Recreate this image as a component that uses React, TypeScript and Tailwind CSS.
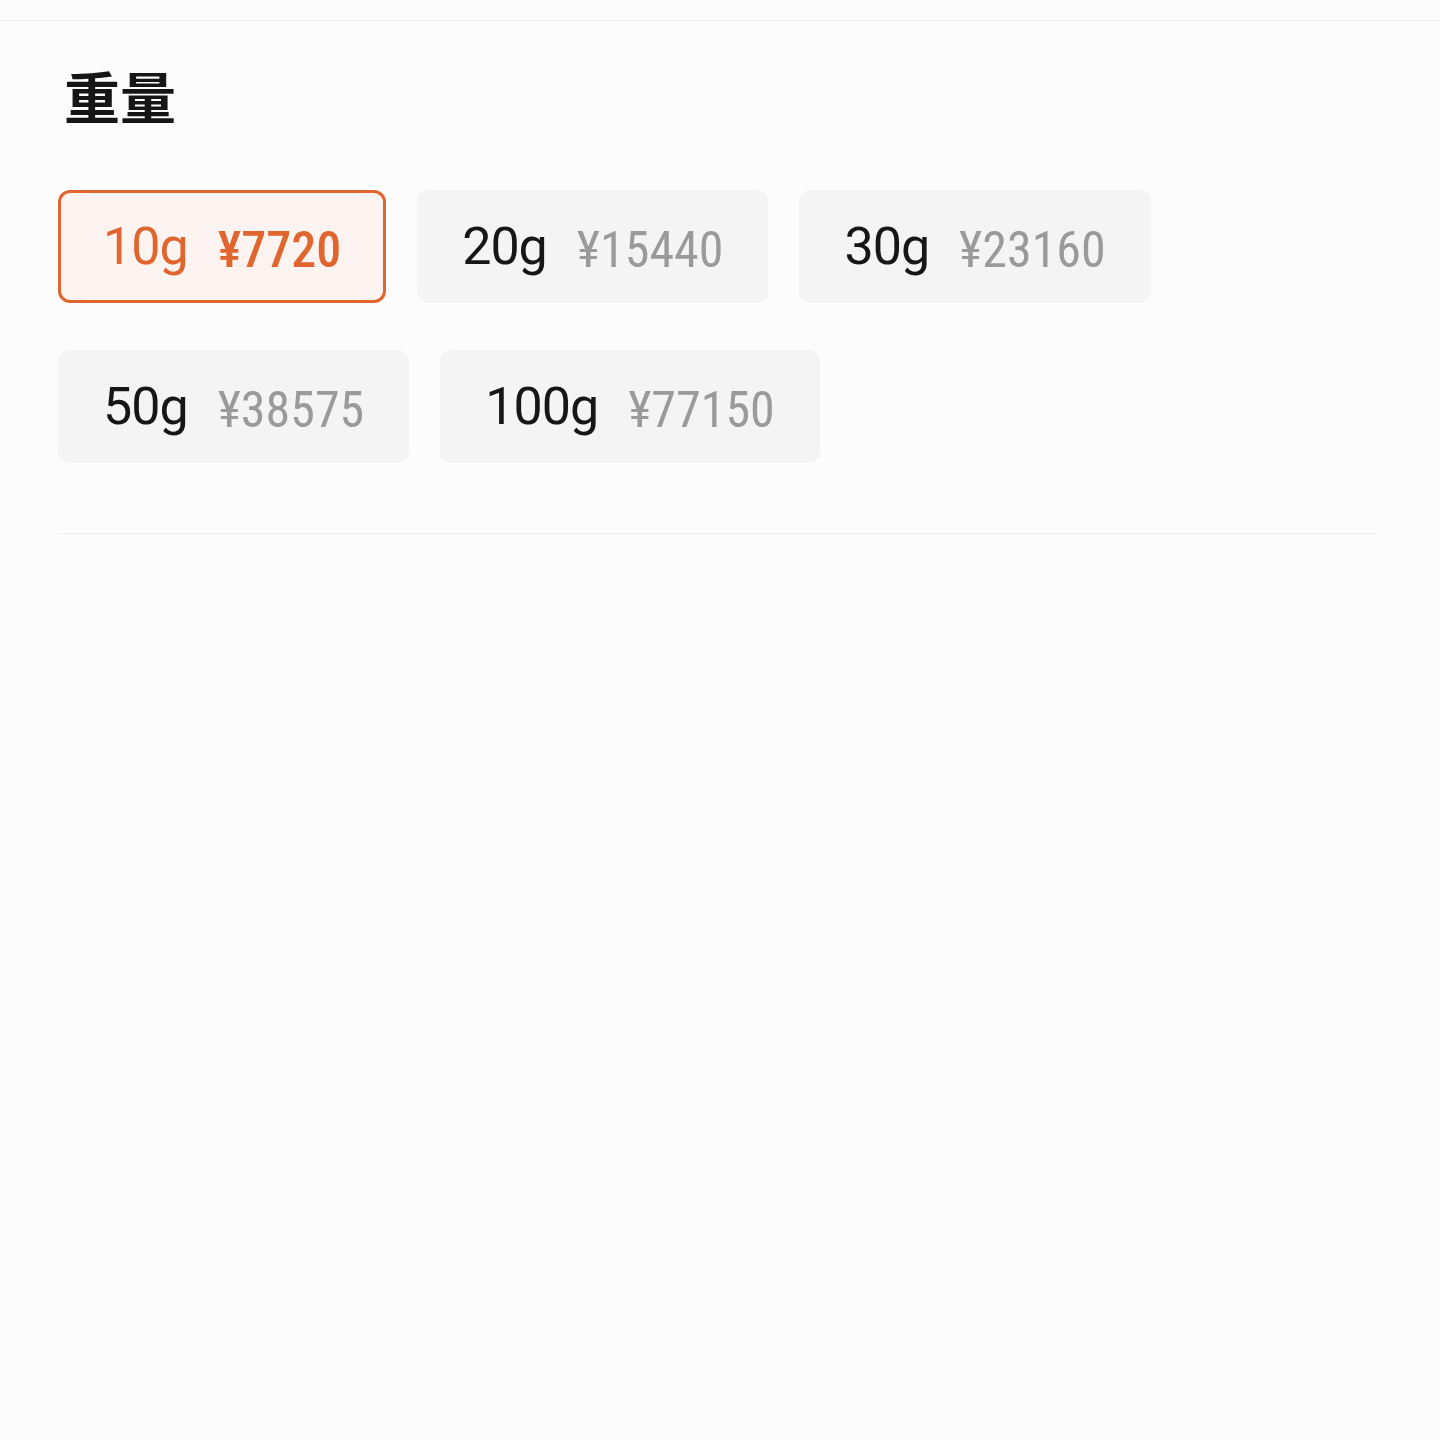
import React from 'react';

interface WeightOption {
  weight: string;
  price: number;
}

const options: WeightOption[] = [
  { weight: '10g', price: 7720 },
  { weight: '20g', price: 15440 },
  { weight: '30g', price: 23160 },
  { weight: '50g', price: 38575 },
  { weight: '100g', price: 77150 },
];

const WeightChip: React.FC<{ option: WeightOption; selected: boolean }> = ({ option, selected }) => (
  <button
    className={`flex items-center gap-[30px] h-[113px] px-[42px] rounded-[12px] border-[3px] ${
      selected ? 'border-[#e0652f] bg-[#fdf4f1]' : 'border-transparent bg-[#f4f4f4]'
    }`}
  >
    <span
      className={`text-[52px] leading-none tracking-[-1px] ${selected ? 'text-[#e0652f]' : 'text-[#161616]'}`}
      style={{ fontFamily: 'Roboto, "Noto Sans", sans-serif' }}
    >
      {option.weight}
    </span>
    <span
      className={`text-[50px] leading-none mt-[6px] ${selected ? 'text-[#e0652f] font-medium' : 'text-[#9a9a9a] font-normal'}`}
      style={{ fontFamily: '"Roboto Condensed", "Liberation Sans Narrow", Roboto, sans-serif' }}
    >
      ¥{option.price}
    </span>
  </button>
);

export default function App() {
  const selected = '10g';

  return (
    <div className="min-h-[1440px] bg-[#fcfcfc]" style={{ fontFamily: '"Noto Sans", "Noto Sans CJK SC", sans-serif' }}>
      <div className="h-[21px] border-b border-[#f0f0f0]" />

      <div className="px-[58px]">
        {/* Title */}
        <h2
          className="pt-[46px] pl-[6px] text-[56px] font-bold leading-none text-[#161616]"
          style={{ fontFamily: '"Noto Sans CJK SC", sans-serif' }}
        >
          重量
        </h2>

        {/* Options */}
        <div className="mt-[67px] flex flex-wrap gap-x-[31px] gap-y-[47px] w-[1130px]">
          {options.map((o) => (
            <WeightChip key={o.weight} option={o} selected={o.weight === selected} />
          ))}
        </div>

        <div className="mt-[70px] mr-[5px] ml-[2px] border-t border-[#ececec]" />
      </div>
    </div>
  );
}
